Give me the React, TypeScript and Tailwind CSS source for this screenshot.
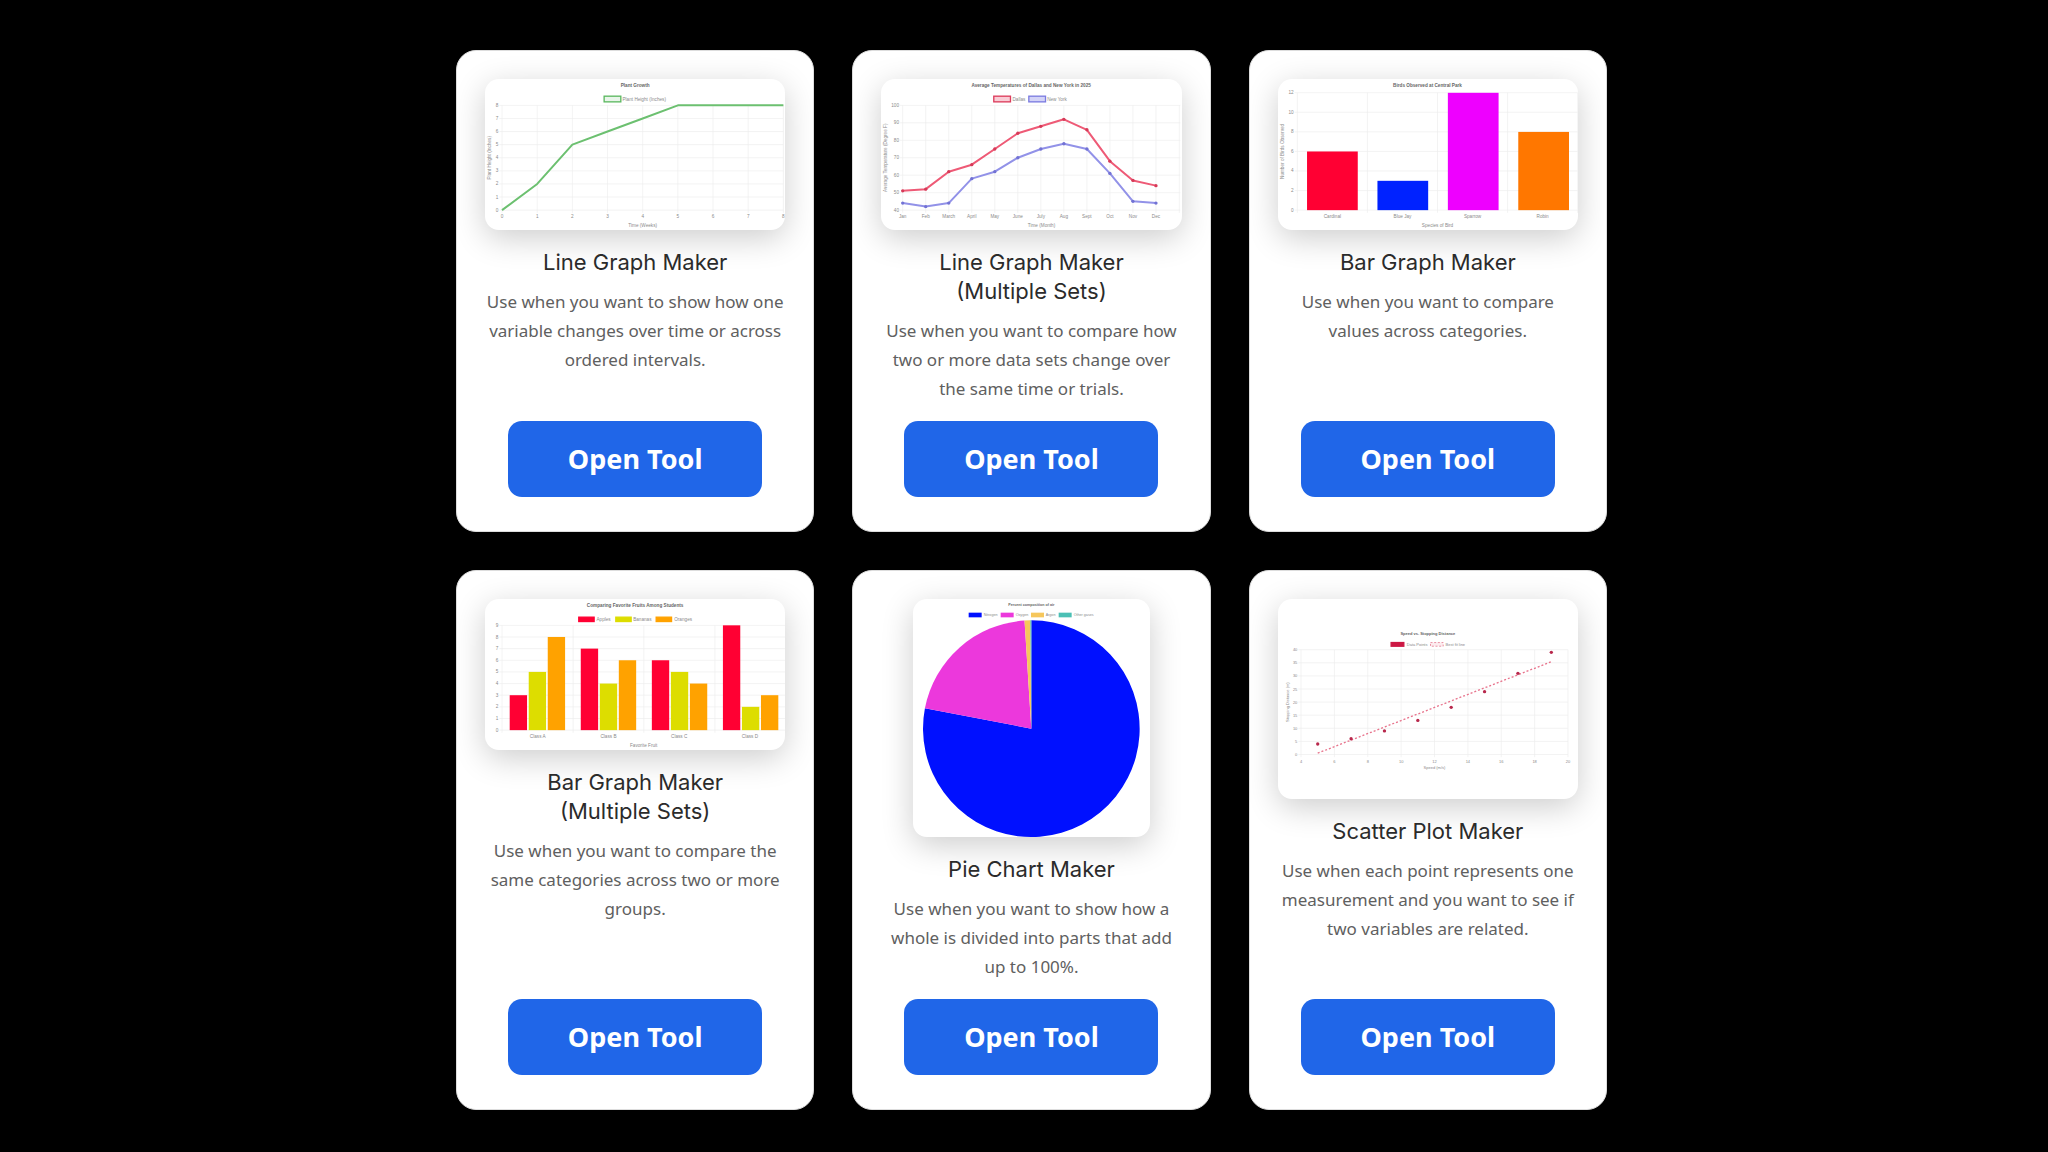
import type { ReactNode } from 'react'

type Tool = {
  title: string
  subtitle?: string
  description: string
  href: string
  chart: ReactNode
}

type Tick = { at: number; label: string }

type LegendItem = {
  x: number
  textX: number
  label: string
  fill: string
  stroke: string
  dashed?: boolean
}

type FrameProps = {
  title: string
  titleX: number
  left: number
  right: number
  top: number
  bottom: number
  xTicks: Tick[]
  xGrid: number[]
  yTicks: Tick[]
  xTitle: string
  yTitle?: string
  yTitleX?: number
  fontSize?: number
}

const MONTHS = ['Jan', 'Feb', 'March', 'April', 'May', 'June', 'July', 'Aug', 'Sept', 'Oct', 'Nov', 'Dec']
const DALLAS = [51, 52, 62, 66, 75, 84, 88, 92, 86, 68, 57, 54]
const NEW_YORK = [44, 42, 44, 58, 62, 70, 75, 78, 75, 61, 45, 44]

const tools: Tool[] = [
  {
    title: 'Line Graph Maker',
    description: 'Use when you want to show how one variable changes over time or across ordered intervals.',
    href: '#line-graph',
    chart: <LineChart />,
  },
  {
    title: 'Line Graph Maker',
    subtitle: '(Multiple Sets)',
    description: 'Use when you want to compare how two or more data sets change over the same time or trials.',
    href: '#line-graph-multiple',
    chart: <MultiLineChart />,
  },
  {
    title: 'Bar Graph Maker',
    description: 'Use when you want to compare values across categories.',
    href: '#bar-graph',
    chart: <BarChart />,
  },
  {
    title: 'Bar Graph Maker',
    subtitle: '(Multiple Sets)',
    description: 'Use when you want to compare the same categories across two or more groups.',
    href: '#bar-graph-multiple',
    chart: <MultiBarChart />,
  },
  {
    title: 'Pie Chart Maker',
    description: 'Use when you want to show how a whole is divided into parts that add up to 100%.',
    href: '#pie-chart',
    chart: <PieChart />,
  },
  {
    title: 'Scatter Plot Maker',
    description: 'Use when each point represents one measurement and you want to see if two variables are related.',
    href: '#scatter-plot',
    chart: <ScatterChart />,
  },
]

export default function App() {
  return (
    <main className="min-h-screen bg-black py-[50px] pr-0 pl-[15px]">
      <div className="mx-auto grid max-w-[1151px] grid-cols-3 gap-[38px]">
        {tools.map((tool) => (
          <ToolCard key={tool.href} tool={tool} />
        ))}
      </div>
    </main>
  )
}

function ToolCard({ tool }: { tool: Tool }) {
  return (
    <article className="flex flex-col items-center rounded-[20px] border border-[#dddddd] bg-white px-7 pt-7 pb-[34px] text-center">
      {tool.chart}
      <h2 className="mt-[18px] font-['Inter','Liberation_Sans',sans-serif] text-[22px] leading-[29px] text-[#2b2b2b]">
        {tool.title}
        {tool.subtitle && <span className="block">{tool.subtitle}</span>}
      </h2>
      <p className="mt-[10px] mb-[18px] font-['Noto_Sans',sans-serif] text-[17px] leading-[29px] text-[#606060]">
        {tool.description}
      </p>
      <a
        href={tool.href}
        className="mt-auto flex h-[76px] w-[254px] max-w-full items-center justify-center rounded-[14px] bg-[#2066e8] pt-px font-['Noto_Sans',sans-serif] text-[27px] font-bold text-white"
      >
        Open Tool
      </a>
    </article>
  )
}

function Preview({
  label,
  viewBox,
  className = 'w-full',
  children,
}: {
  label: string
  viewBox: string
  className?: string
  children: ReactNode
}) {
  return (
    <svg
      role="img"
      aria-label={label}
      viewBox={viewBox}
      className={`${className} rounded-[14px] bg-white font-['Liberation_Sans',sans-serif] shadow-[0_8px_32px_rgba(0,0,0,0.2)]`}
    >
      {children}
    </svg>
  )
}

function Frame({
  title,
  titleX,
  left,
  right,
  top,
  bottom,
  xTicks,
  xGrid,
  yTicks,
  xTitle,
  yTitle,
  yTitleX = 13,
  fontSize = 14,
}: FrameProps) {
  const middle = (top + bottom) / 2

  return (
    <g fontSize={fontSize} fill="#8a8a8a" dominantBaseline="central">
      <text x={titleX} y={top > 150 ? top - 50 : 20} textAnchor="middle" fontWeight="bold" fill="#666666">
        {title}
      </text>
      {xGrid.map((x) => (
        <line key={x} x1={x} x2={x} y1={top} y2={bottom + 8} stroke="#ededed" strokeWidth={2} />
      ))}
      {yTicks.map((tick) => (
        <g key={tick.label}>
          <line x1={left - 8} x2={right} y1={tick.at} y2={tick.at} stroke="#ededed" strokeWidth={2} />
          <text x={left - 11} y={tick.at} textAnchor="end">
            {tick.label}
          </text>
        </g>
      ))}
      {xTicks.map((tick) => (
        <text key={tick.label} x={tick.at} y={bottom + 20} textAnchor="middle">
          {tick.label}
        </text>
      ))}
      <text x={(left + right) / 2} y={bottom + (top > 150 ? 38 : 46)} textAnchor="middle">
        {xTitle}
      </text>
      {yTitle && (
        <text transform={`translate(${yTitleX} ${middle}) rotate(-90)`} textAnchor="middle">
          {yTitle}
        </text>
      )}
    </g>
  )
}

function Legend({
  items,
  y,
  width = 50,
  height = 17,
  fontSize = 14,
}: {
  items: LegendItem[]
  y: number
  width?: number
  height?: number
  fontSize?: number
}) {
  return (
    <g fontSize={fontSize} fill="#8a8a8a" dominantBaseline="central">
      {items.map((item) => (
        <g key={item.label}>
          <rect
            x={item.x}
            y={y - height / 2}
            width={width}
            height={height}
            fill={item.fill}
            stroke={item.stroke}
            strokeWidth={item.dashed ? 2 : 4}
            strokeDasharray={item.dashed ? '6 5' : undefined}
          />
          <text x={item.textX} y={y}>
            {item.label}
          </text>
        </g>
      ))}
    </g>
  )
}

// evenly spaced ticks running down from the highest value
function valueTicks(max: number, min: number, step: number, top: number, bottom: number): Tick[] {
  const ticks: Tick[] = []
  for (let value = max; value >= min; value -= step) {
    ticks.push({ at: top + ((max - value) / (max - min)) * (bottom - top), label: String(value) })
  }
  return ticks
}

function LineChart() {
  const values = [0, 2, 5, 6, 7, 8, 8, 8, 8]
  const xs = values.map((_, i) => 51 + i * 105.4)
  const ys = values.map((value) => 393 - value * 39.25)

  return (
    <Preview label="Plant Growth line graph" viewBox="0 0 900 453">
      <Frame
        title="Plant Growth"
        titleX={450}
        left={51}
        right={894}
        top={79}
        bottom={393}
        xGrid={xs}
        xTicks={xs.map((x, i) => ({ at: x, label: String(i) }))}
        yTicks={valueTicks(8, 0, 1, 79, 393)}
        xTitle="Time (Weeks)"
        yTitle="Plant Height (Inches)"
      />
      <Legend y={60} items={[{ x: 357, textX: 412, label: 'Plant Height (Inches)', fill: '#e9f5ea', stroke: '#5cb860' }]} />
      <polyline
        points={xs.map((x, i) => `${x},${ys[i]}`).join(' ')}
        fill="none"
        stroke="#6cc070"
        strokeWidth={6}
        strokeLinejoin="round"
      />
    </Preview>
  )
}

function MultiLineChart() {
  const xs = MONTHS.map((_, i) => 65 + i * 69)
  const sets = [
    { name: 'Dallas', values: DALLAS, line: '#ee5a76', dot: '#d63a58' },
    { name: 'New York', values: NEW_YORK, line: '#9292e8', dot: '#7272d4' },
  ]

  return (
    <Preview label="Average temperatures line graph" viewBox="0 0 900 453">
      <Frame
        title="Average Temperatures of Dallas and New York in 2025"
        titleX={450}
        left={65}
        right={897}
        top={79}
        bottom={393}
        xGrid={[...xs, 894]}
        xTicks={xs.map((x, i) => ({ at: x, label: MONTHS[i] }))}
        yTicks={valueTicks(100, 40, 10, 79, 393)}
        xTitle="Time (Month)"
        yTitle="Average Temperature (Degree F)"
      />
      <Legend
        y={60}
        items={[
          { x: 338, textX: 394, label: 'Dallas', fill: '#f9ccd5', stroke: '#dc3c5c' },
          { x: 443, textX: 498, label: 'New York', fill: '#d3d3f7', stroke: '#7b7be0' },
        ]}
      />
      {sets.map((set) => {
        const ys = set.values.map((value) => 79 + (100 - value) * 5.23)
        return (
          <g key={set.name}>
            <polyline
              points={xs.map((x, i) => `${x},${ys[i]}`).join(' ')}
              fill="none"
              stroke={set.line}
              strokeWidth={6}
              strokeLinejoin="round"
            />
            {xs.map((x, i) => (
              <circle key={x} cx={x} cy={ys[i]} r={5} fill={set.dot} />
            ))}
          </g>
        )
      })}
    </Preview>
  )
}

function BarChart() {
  const bars = [
    { label: 'Cardinal', value: 6, color: '#ff0033' },
    { label: 'Blue Jay', value: 3, color: '#0022ff' },
    { label: 'Sparrow', value: 12, color: '#ee00ff' },
    { label: 'Robin', value: 8, color: '#ff7700' },
  ]

  return (
    <Preview label="Birds observed bar graph" viewBox="0 0 900 453">
      <Frame
        title="Birds Observed at Central Park"
        titleX={448}
        left={58}
        right={898}
        top={41}
        bottom={393}
        xGrid={[58, 268, 478, 688, 898]}
        xTicks={bars.map((bar, i) => ({ at: 163 + i * 210, label: bar.label }))}
        yTicks={valueTicks(12, 0, 2, 41, 393)}
        xTitle="Species of Bird"
        yTitle="Number of Birds Observed"
      />
      {bars.map((bar, i) => (
        <rect
          key={bar.label}
          x={87 + i * 211}
          y={393 - bar.value * 29.3}
          width={152}
          height={bar.value * 29.3}
          fill={bar.color}
        />
      ))}
    </Preview>
  )
}

function MultiBarChart() {
  const groups = [
    { label: 'Class A', values: [3, 5, 8] },
    { label: 'Class B', values: [7, 4, 6] },
    { label: 'Class C', values: [6, 5, 4] },
    { label: 'Class D', values: [9, 2, 3] },
  ]
  const colors = ['#ff0033', '#dddd00', '#ffa200']

  return (
    <Preview label="Favorite fruits bar graph" viewBox="0 0 900 453">
      <Frame
        title="Comparing Favorite Fruits Among Students"
        titleX={450}
        left={51}
        right={900}
        top={79}
        bottom={393}
        xGrid={[51, 264, 476, 689]}
        xTicks={groups.map((group, i) => ({ at: 158 + i * 212, label: group.label }))}
        yTicks={valueTicks(9, 0, 1, 79, 393)}
        xTitle="Favorite Fruit"
      />
      <Legend
        y={61}
        width={46}
        height={13}
        items={[
          { x: 281, textX: 334, label: 'Apples', fill: colors[0], stroke: colors[0] },
          { x: 392, textX: 444, label: 'Bananas', fill: colors[1], stroke: colors[1] },
          { x: 513, textX: 567, label: 'Oranges', fill: colors[2], stroke: colors[2] },
        ]}
      />
      {groups.map((group, i) =>
        group.values.map((value, j) => (
          <rect
            key={`${group.label}-${j}`}
            x={74 + i * 213 + j * 57}
            y={393 - value * 34.9}
            width={52}
            height={value * 34.9}
            fill={colors[j]}
          />
        )),
      )}
    </Preview>
  )
}

function PieChart() {
  const slices = [
    { label: 'Nitrogen', share: 0.78, color: '#0010ff', x: 169, textX: 212 },
    { label: 'Oxygen', share: 0.21, color: '#ec38dc', x: 265, textX: 308 },
    { label: 'Argon', share: 0.0085, color: '#f6c75c', x: 356, textX: 398 },
    { label: 'Other gases', share: 0.0015, color: '#4bc0b5', x: 439, textX: 482 },
  ]

  function point(share: number) {
    const angle = share * 2 * Math.PI
    return `${355 + 325 * Math.sin(angle)} ${389 - 325 * Math.cos(angle)}`
  }

  return (
    <Preview label="Composition of air pie chart" viewBox="0 0 711 714" className="w-[237px] max-w-full">
      <text
        x={355}
        y={17}
        fontSize={11}
        fontWeight="bold"
        fill="#666666"
        textAnchor="middle"
        dominantBaseline="central"
      >
        Percent composition of air
      </text>
      <Legend
        y={48}
        width={35}
        height={10}
        fontSize={11}
        items={slices.map((slice) => ({ ...slice, fill: slice.color, stroke: slice.color }))}
      />
      {slices.map((slice, i) => {
        const start = slices.slice(0, i).reduce((sum, item) => sum + item.share, 0)
        return (
          <path
            key={slice.label}
            d={`M355 389 L${point(start)} A325 325 0 ${slice.share > 0.5 ? 1 : 0} 1 ${point(start + slice.share)} Z`}
            fill={slice.color}
          />
        )
      })}
    </Preview>
  )
}

function ScatterChart() {
  const values = [4, 6, 9, 13, 18, 24, 31, 39]
  const grid = [69, 169, 269, 369, 469, 569, 669, 769, 869]

  return (
    <Preview label="Speed and stopping distance scatter plot" viewBox="0 0 900 600">
      <Frame
        title="Speed vs. Stopping Distance"
        titleX={449}
        left={69}
        right={869}
        top={152}
        bottom={466}
        xGrid={grid}
        xTicks={grid.map((x, i) => ({ at: x, label: String(4 + i * 2) }))}
        yTicks={valueTicks(40, 0, 5, 152, 466)}
        xTitle="Speed (m/s)"
        yTitle="Stopping Distance (m)"
        yTitleX={29}
        fontSize={12}
      />
      <Legend
        y={136}
        width={38}
        height={11}
        fontSize={12}
        items={[
          { x: 339, textX: 386, label: 'Data Points', fill: '#cc1844', stroke: '#cc1844' },
          { x: 457, textX: 502, label: 'Best fit line', fill: '#fdecef', stroke: '#e0607c', dashed: true },
        ]}
      />
      <line x1={119} y1={462} x2={819} y2={188} stroke="#e8738c" strokeWidth={4} strokeDasharray="6 6" />
      {values.map((value, i) => (
        <circle key={value} cx={119 + i * 100} cy={466 - value * 7.85} r={5} fill="#b8284c" />
      ))}
    </Preview>
  )
}
